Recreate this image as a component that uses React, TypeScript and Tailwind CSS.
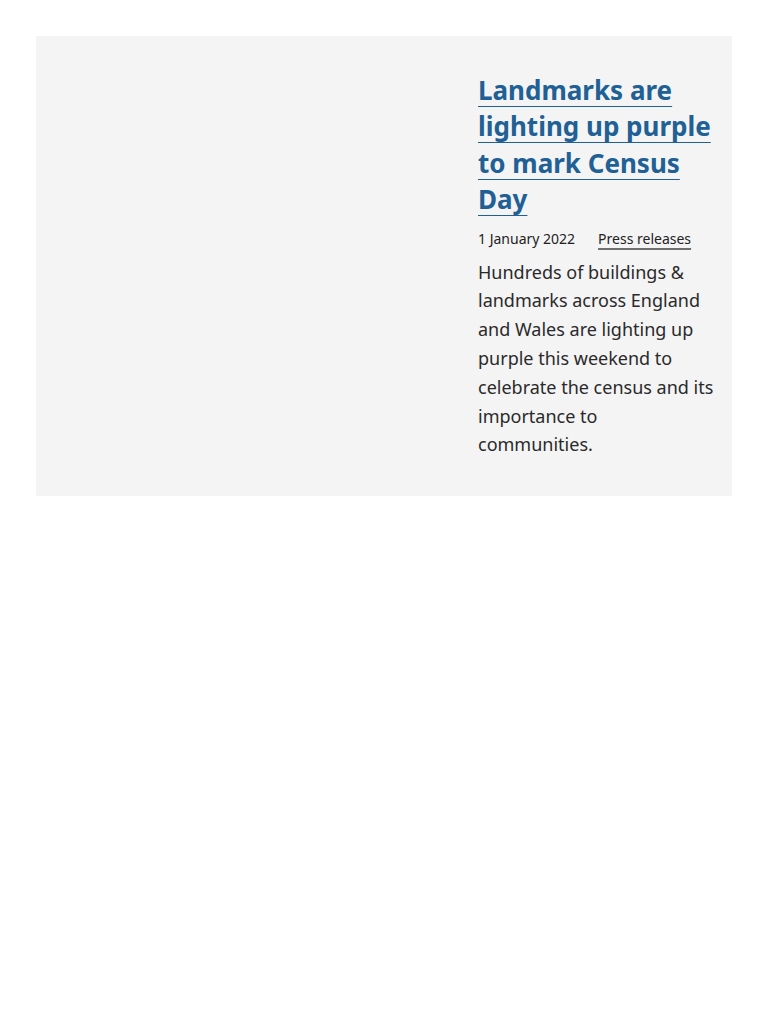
export default function App() {
  return (
    <div className="min-h-screen bg-white p-9 font-['Noto_Sans',sans-serif]">
      <article className="grid grid-cols-[1fr_238px] gap-0 bg-[#f4f4f4] pt-9 pb-[37px] pr-4">
        {/* image column (empty) */}
        <div />
        <div>
          <h2 className="text-[26px] font-bold leading-[36.4px] text-[#206095]">
            <a href="#" className="underline decoration-1 underline-offset-[6px]">
              Landmarks are lighting up purple to mark Census Day
            </a>
          </h2>
          <div className="mt-[10px] flex items-center gap-[23px] text-[14px] leading-[22px] text-[#222222]">
            <span>1 January 2022</span>
            <a href="#" className="underline decoration-[#707070] decoration-2 underline-offset-[4px]">
              Press releases
            </a>
          </div>
          <p className="mt-[8px] text-[18px] leading-[28.8px] text-[#2a2a2a]">
            Hundreds of buildings &amp; landmarks across England and Wales are lighting up purple this weekend to celebrate the census and its importance to communities.
          </p>
        </div>
      </article>
    </div>
  )
}
